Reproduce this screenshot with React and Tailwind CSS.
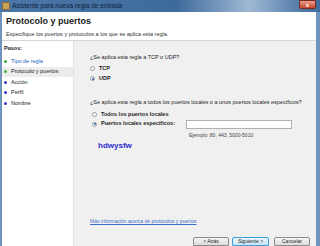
export default function App() {
  const steps = [
    { label: 'Tipo de regla', done: true },
    { label: 'Protocolo y puertos', done: true, active: true },
    { label: 'Acción' },
    { label: 'Perfil' },
    { label: 'Nombre' },
  ];

  return (
    <div className="w-[320px] h-[246px] overflow-hidden flex flex-col bg-[#6f94bd] font-['Liberation_Sans',sans-serif] text-[#1e1e1e]">
      {/* Title bar */}
      <div className="h-[12px] flex items-center pl-[2px] pr-[4px] bg-[linear-gradient(90deg,#4a76a8_0%,#3e6a9c_55%,#9fb9d4_78%,#5b82ae_92%,#3f6b9e_100%)]">
        <div className="w-[8px] h-[8px] rounded-[1px] bg-[#c9a15a] border border-[#8a6a2a]" />
        <span className="ml-[2px] text-[6.5px] text-[#10233a] leading-none">Asistente para nueva regla de entrada</span>
        <div className="ml-auto self-start w-[17px] h-[9px] rounded-b-[2px] bg-[linear-gradient(#e8a08e,#c7432b)] border border-[#7a2a1e] flex items-center justify-center text-white text-[6px] font-bold leading-none">
          x
        </div>
      </div>

      <div className="flex-1 flex flex-col ml-[2px] mr-[4px] bg-[#f0f0f0] min-h-0">
        {/* Header */}
        <div className="h-[29px] bg-white border-b border-[#d5d5d5] pl-[4px] pt-[5px]">
          <div className="text-[9px] font-bold text-[#1a1a1a] leading-none">Protocolo y puertos</div>
          <div className="mt-[6px] text-[5.5px] text-[#333] leading-none">
            Especifique los puertos y protocolos a los que se aplica esta regla.
          </div>
        </div>

        <div className="flex-1 flex min-h-0">
          {/* Steps pane */}
          <div className="w-[72px] bg-white border-r border-[#e3e3e3] pt-[3px]">
            <div className="pl-[2px] text-[5.5px] font-bold text-[#222] leading-none h-[10px] flex items-center">Pasos:</div>
            <div className="mt-[2px] flex flex-col">
              {steps.map((s) => (
                <div
                  key={s.label}
                  className={
                    'h-[10.5px] flex items-center pl-[2px] gap-[4px] ' +
                    (s.active ? 'bg-[#ececec]' : '')
                  }
                >
                  <span className={'w-[3px] h-[3px] rounded-full ' + (s.done ? 'bg-[#3cb03c]' : 'bg-[#3a3ac8]')} />
                  <span
                    className={
                      'text-[5.5px] leading-none ' +
                      (s.done && !s.active ? 'text-[#1a5fbf]' : 'text-[#222]')
                    }
                  >
                    {s.label}
                  </span>
                </div>
              ))}
            </div>
          </div>

          {/* Main content */}
          <div className="flex-1 flex flex-col pl-[16px] pt-[14px] text-[5.5px] leading-none">
            <div>¿Se aplica esta regla a TCP o UDP?</div>
            <div className="mt-[5px] flex items-center gap-[4px]">
              <span className="w-[5px] h-[5px] rounded-full border border-[#9a9a9a] bg-white" />
              <span className="font-bold">TCP</span>
            </div>
            <div className="mt-[5px] flex items-center gap-[4px]">
              <span className="w-[5px] h-[5px] rounded-full border border-[#9a9a9a] bg-white flex items-center justify-center">
                <span className="w-[2px] h-[2px] rounded-full bg-[#2a5aa8]" />
              </span>
              <span className="font-bold">UDP</span>
            </div>

            <div className="mt-[18px]">¿Se aplica esta regla a todos los puertos locales o a unos puertos locales específicos?</div>
            <div className="mt-[7px] pl-[2px] flex items-center gap-[4px]">
              <span className="w-[5px] h-[5px] rounded-full border border-[#9a9a9a] bg-white" />
              <span className="font-bold">Todos los puertos locales</span>
            </div>
            <div className="mt-[2px] pl-[2px] flex items-center">
              <div className="flex items-center gap-[4px] w-[94px]">
                <span className="w-[5px] h-[5px] rounded-full border border-[#9a9a9a] bg-white flex items-center justify-center">
                  <span className="w-[2px] h-[2px] rounded-full bg-[#2a5aa8]" />
                </span>
                <span className="font-bold">Puertos locales específicos:</span>
              </div>
              <div className="w-[106px] h-[9px] bg-white border border-[#b0b0b0]" />
            </div>
            <div className="mt-[4px] pl-[99px] text-[5px] text-[#444]">Ejemplo: 80, 443, 5000-5010</div>
            <div className="mt-[4px] pl-[8px] text-[8px] font-bold text-[#2b2bd0]">hdwysfw</div>

            <div className="mt-auto mb-[12px] text-[5px] text-[#3b6fc9] underline">
              Más información acerca de protocolos y puertos
            </div>
            <div className="h-[10px] flex items-end justify-end gap-[3px] pr-[6px]">
              <div className="w-[36px] h-[9px] rounded-t-[2px] border border-[#8c8c8c] bg-[linear-gradient(#f6f6f6,#dcdcdc)] flex items-center justify-center text-[5px]">
                &lt; Atrás
              </div>
              <div className="w-[37px] h-[9px] rounded-t-[2px] border border-[#3c9fd8] bg-[linear-gradient(#eaf5fc,#c8e4f6)] flex items-center justify-center text-[5px]">
                Siguiente &gt;
              </div>
              <div className="w-[36px] h-[9px] ml-[2px] rounded-t-[2px] border border-[#8c8c8c] bg-[linear-gradient(#f6f6f6,#dcdcdc)] flex items-center justify-center text-[5px]">
                Cancelar
              </div>
            </div>
          </div>
        </div>
      </div>
    </div>
  );
}
